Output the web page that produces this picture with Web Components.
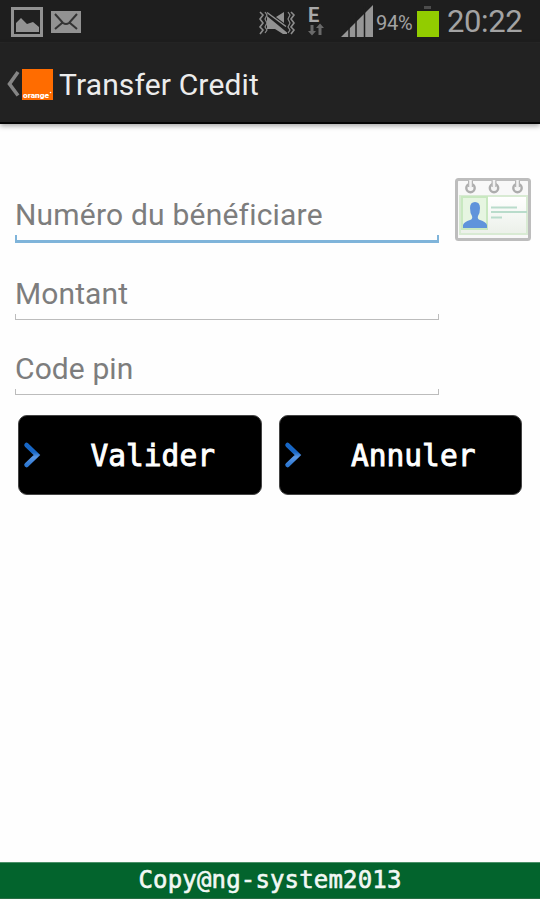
<!DOCTYPE html>
<html lang="fr">
<head>
<meta charset="utf-8">
<title>Transfer Credit</title>
<style>
    body {
        margin: 0;
        background: #fefefe;
        font-family: Roboto, sans-serif;
    }
</style>
</head>
<body>
<transfer-screen></transfer-screen>

<script>
function define(name, html) {
    const template = document.createElement("template");
    template.innerHTML = html;

    customElements.define(name, class extends HTMLElement {
        constructor() {
            super();
            this.attachShadow({ mode: "open" });
            this.shadowRoot.append(template.content.cloneNode(true));
        }
    });
}

/* Phone status bar */
define("status-bar", `
    <style>
        :host {
            display: flex;
            height: 43px;
            background: #1e1e1e;
            color: #a3a3a3;
            box-sizing: border-box;
            border-bottom: 1px solid #272727;
        }
        svg { display: block; flex: none; }
        .space { flex: 1; }
        .battery { width: 37px; margin-left: 1px; font-size: 20px; line-height: 46px; letter-spacing: -0.2px; white-space: nowrap; }
        .clock { width: 93px; font-size: 31px; line-height: 43px; white-space: nowrap; letter-spacing: -0.4px; }
    </style>
    <svg width="90" height="42" viewBox="0 0 90 42">
        <rect x="12.5" y="8.5" width="29" height="27" fill="#202020" stroke="#929292" stroke-width="3"/>
        <path d="M16 32V23l5-5 6 6 6-2 6 5v5z" fill="#929292"/>
        <rect x="51" y="11" width="30" height="22" fill="#929292"/>
        <path d="M55 14l8 9q3 2 6 0l8-9M55 29l7-6M77 29l-7-6" fill="none" stroke="#333" stroke-width="2"/>
    </svg>
    <span class="space"></span>
    <svg width="118" height="42" viewBox="257 0 118 42">
        <g fill="none" stroke="#8c8c8c" stroke-width="1.6">
            <path d="M260 12l3 3-3 4 3 4-3 4 3 3-3 4"/>
            <path d="M265 12l2 3-2 4 2 4-2 4 2 3-2 3" stroke-width="1.2"/>
            <path d="M288 12l2 3-2 4 2 4-2 4 2 3-2 3" stroke-width="1.2"/>
            <path d="M291 12l3 3-3 4 3 4-3 4 3 3-3 4"/>
        </g>
        <path d="M267 16l20 16.500v1.500h-4l-8-5h-8zM276 17l8-5v11z" fill="#929292"/>
        <path d="M267 12.500l19 14" stroke="#929292" stroke-width="1.500"/>
        <text x="308" y="22" font-family="Roboto" font-size="20" font-weight="700" fill="#a9a9a9">E</text>
        <path d="M310.500 25h3v6h2.500l-4 4.500-4-4.500h2.500zM318.500 35h3v-7h2.500l-4-4.500-4 4.500h2.500z" fill="#696969"/>
        <path d="M341 37L373 5V37z" fill="#969696"/>
        <path d="M349 20V38M356 14V38M364.500 6V38" stroke="#1e1e1e" stroke-width="1.500"/>
    </svg>
    <span class="battery">94%</span>
    <svg width="34" height="42" viewBox="413 0 34 42">
        <rect x="424" y="6" width="7" height="3" fill="#4c4c4c"/>
        <rect x="417" y="11" width="22" height="26" fill="#92cc00"/>
    </svg>
    <span class="clock">20:22</span>
`);

/* Title bar with back arrow and logo */
define("action-bar", `
    <style>
        :host {
            display: flex;
            height: 81px;
            box-sizing: border-box;
            background: #222;
            border-bottom: 2px solid #050505;
            box-shadow: 0 2px 5px rgba(0, 0, 0, 0.35);
            color: #ececec;
        }
        svg { display: block; flex: none; }
        ::slotted(span) { font-size: 30px; line-height: 83px; letter-spacing: 0.15px; white-space: nowrap; }
    </style>
    <svg width="59" height="79" viewBox="0 43 59 79">
        <path d="M18 72l-8.500 12 8.500 11.500" fill="none" stroke="#858585" stroke-width="3.600"/>
        <rect x="22" y="69" width="31" height="31" fill="#ff6c00"/>
        <text x="23" y="98" font-family="Roboto" font-size="8" font-weight="900" fill="#fff" textLength="26" lengthAdjust="spacingAndGlyphs">orange</text>
        <circle cx="50.500" cy="92.500" r=".8" fill="#fff"/>
    </svg>
    <slot></slot>
`);

/* Holo style text field, open bracket underline */
define("text-field", `
    <style>
        :host {
            display: flex;
            flex-direction: column;
            justify-content: flex-end;
            box-sizing: border-box;
            height: var(--field-height, 76px);
            color: #7d7d7d;
        }
        .label {
            font-size: 30px;
            line-height: 36px;
            padding-bottom: var(--gap, 2px);
            letter-spacing: var(--spacing, 0.1px);
            white-space: nowrap;
        }
        .line {
            height: var(--tick-height, 6px);
            border: solid var(--line-color, #bcbcbc);
            border-width: 0 var(--line-side, 1px) var(--line, 1px);
            box-sizing: border-box;
        }
    </style>
    <span class="label"><slot></slot></span>
    <div class="line"></div>
`);

define("contact-icon", `
    <style>
        :host { display: block; }
        svg { display: block; }
    </style>
    <svg width="80" height="68" viewBox="453 175 80 68">
        <defs>
            <linearGradient id="paper" x2="0" y2="1"><stop stop-color="#fff"/><stop offset="1" stop-color="#ebf0e9"/></linearGradient>
            <filter id="soft"><feGaussianBlur stdDeviation=".7"/></filter>
        </defs>
        <g filter="url(#soft)">
            <rect x="456.500" y="179.500" width="73" height="60" rx="2" fill="#f8f8f8" stroke="#bdbdbd" stroke-width="3"/>
            <rect x="460" y="196" width="67" height="38" fill="url(#paper)" stroke="#d8ead3" stroke-width="2"/>
            <rect x="462" y="197" width="25" height="32" fill="#e6f5e1" stroke="#c8e8c0" stroke-width="2"/>
            <path d="M463 228v-3q1-3 7-5 3-1 2-4-2-3-2-8 0-6 5-6t5 6q0 5-2 8-1 3 2 4 6 2 7 5v3z" fill="#5f94db"/>
            <path d="M491 207.500h26M491 212h36M491 217.500h11" stroke="#b9dccb" stroke-width="2"/>
            <g fill="#f6f6f6" stroke="#adadad" stroke-width="2.400">
                <circle cx="470.500" cy="188" r="4.200"/>
                <circle cx="494" cy="188" r="4.200"/>
                <circle cx="517.500" cy="188" r="4.200"/>
            </g>
            <path d="M470.500 181v6M494 181v6M517.500 181v6" stroke="#b4b4b4" stroke-width="5"/>
            <path d="M470.500 180v8M494 180v8M517.500 180v8" stroke="#f2f2f2" stroke-width="2.500"/>
        </g>
    </svg>
`);

define("arrow-button", `
    <style>
        :host {
            display: flex;
            align-items: center;
            height: 80px;
            box-sizing: border-box;
            background: #000;
            border: 1px solid #444;
            border-radius: 9px;
            color: #fff;
        }
        svg { display: block; flex: none; margin-left: 4px; }
        .label {
            flex: 1;
            padding: 1px 0 0 2px;
            text-align: center;
            font: 29.5px "DejaVu Sans Mono", monospace;
            -webkit-text-stroke: 0.9px #fff;
        }
    </style>
    <svg width="20" height="28" viewBox="0 0 20 28">
        <defs>
            <linearGradient id="blue" x2="0" y2="1"><stop offset=".35" stop-color="#1766c5"/><stop offset=".6" stop-color="#5b98e5"/><stop offset="1" stop-color="#2e78d2"/></linearGradient>
        </defs>
        <path d="M3.500 4L14 14 3.500 24" fill="none" stroke="url(#blue)" stroke-width="4.500" stroke-linecap="round"/>
    </svg>
    <span class="label"><slot></slot></span>
`);

define("copy-footer", `
    <style>
        :host {
            display: block;
            height: 37px;
            box-sizing: border-box;
            background: #03642d;
            border-top: 1px solid #4b9169;
            border-bottom: 1px solid #276c43;
            margin-bottom: 1px;
            color: #f2f8f4;
            font: 24px/34px "DejaVu Sans Mono", monospace;
            letter-spacing: 0.17px;
            text-align: center;
            -webkit-text-stroke: 0.6px #f2f8f4;
        }
    </style>
    <slot></slot>
`);

define("transfer-screen", `
    <style>
        :host { display: flex; flex-direction: column; width: 540px; height: 900px; }
        main { flex: 1; }
        .form { display: flex; align-items: flex-start; padding: 51px 7px 0 15px; }
        .fields { width: 424px; margin-right: 14px; }
        .first { --field-height: 68px; --line: 3px; --line-side: 2px; --line-color: #7fb4da; --tick-height: 8px; --gap: 2px; --spacing: 0.2px; }
        .second { --field-height: 77px; }
        .third { --field-height: 75px; }
        .buttons { display: flex; gap: 17px; padding: 20px 18px 0 18px; }
        .buttons arrow-button { flex: 1; }
    </style>
    <status-bar></status-bar>
    <action-bar><span>Transfer Credit</span></action-bar>
    <main>
        <div class="form">
            <div class="fields">
                <text-field class="first">Numéro du bénéficiare</text-field>
                <text-field class="second">Montant</text-field>
                <text-field class="third">Code pin</text-field>
            </div>
            <contact-icon></contact-icon>
        </div>
        <div class="buttons">
            <arrow-button>Valider</arrow-button>
            <arrow-button>Annuler</arrow-button>
        </div>
    </main>
    <copy-footer>Copy@ng-system2013</copy-footer>
`);
</script>
</body>
</html>
